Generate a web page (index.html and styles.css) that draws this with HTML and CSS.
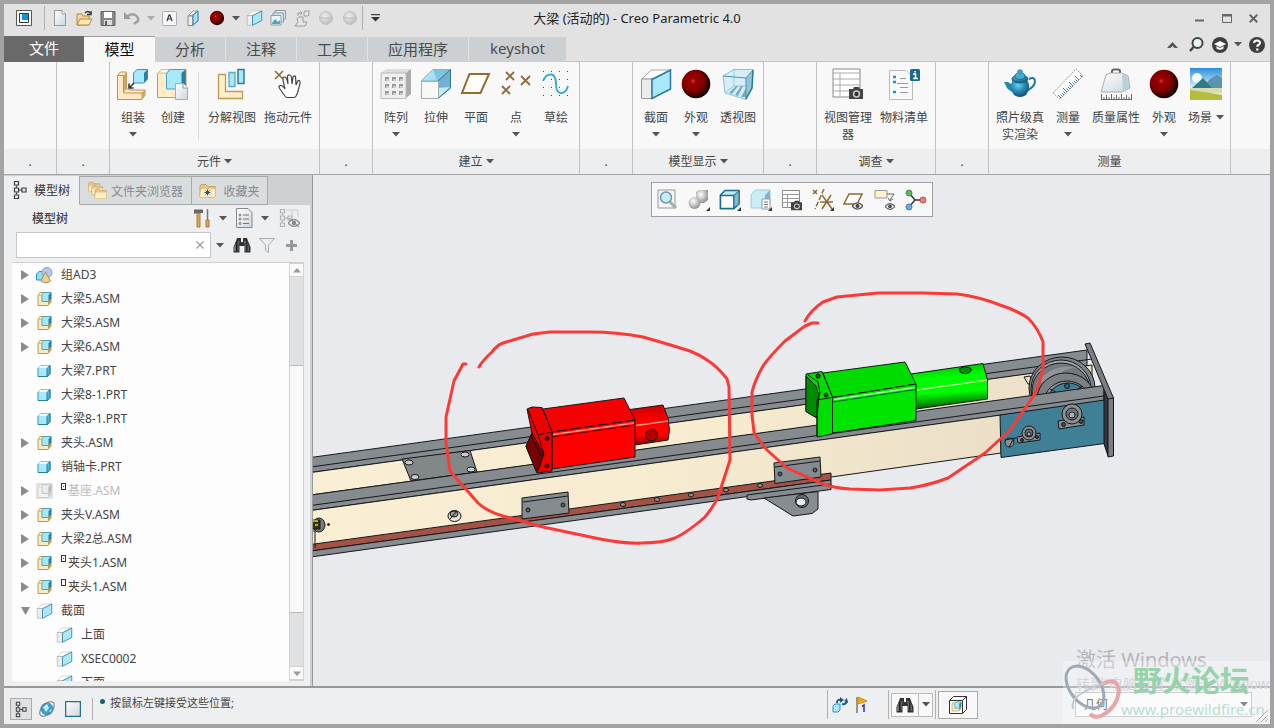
FILE: index.html
```html
<!DOCTYPE html>
<html lang="zh-CN">
<head>
<meta charset="utf-8">
<title>大梁 (活动的) - Creo Parametric 4.0</title>
<link rel="stylesheet" href="styles.css">
</head>
<body>
<svg class="defs" aria-hidden="true">
  <defs>
    <linearGradient id="gBlue" x1="0" y1="0" x2="1" y2="1"><stop offset="0" stop-color="#c8f2ff"/><stop offset="1" stop-color="#5fb9dc"/></linearGradient>
    <linearGradient id="gPage" x1="0" y1="0" x2="1" y2="1"><stop offset="0" stop-color="#fff"/><stop offset="1" stop-color="#ccd6de"/></linearGradient>
    <radialGradient id="gRed" cx=".4" cy=".4" r=".62"><stop offset="0" stop-color="#c84040"/><stop offset=".15" stop-color="#a00000"/><stop offset=".6" stop-color="#7c0000"/><stop offset="1" stop-color="#080000"/></radialGradient>
    <radialGradient id="gGray" cx=".4" cy=".35" r=".7"><stop offset="0" stop-color="#fff"/><stop offset="1" stop-color="#8a8a8a"/></radialGradient>
    <radialGradient id="gPot" cx=".4" cy=".3" r=".75"><stop offset="0" stop-color="#6fd0f0"/><stop offset=".5" stop-color="#2588b0"/><stop offset="1" stop-color="#0d4868"/></radialGradient>
    <linearGradient id="gSky" x1="0" y1="0" x2="0" y2="1"><stop offset="0" stop-color="#2a8fdc"/><stop offset=".6" stop-color="#d8eefa"/></linearGradient>
    <linearGradient id="gRodR" x1="0" y1="0" x2="0" y2="1"><stop offset="0" stop-color="#c00"/><stop offset=".4" stop-color="#f00"/><stop offset=".75" stop-color="#f00"/><stop offset="1" stop-color="#800"/></linearGradient>
    <linearGradient id="gRodG" x1="0" y1="0" x2=".12" y2="1"><stop offset="0" stop-color="#00b800"/><stop offset=".35" stop-color="#00fc00"/><stop offset=".68" stop-color="#00fa00"/><stop offset="1" stop-color="#006400"/></linearGradient>
    <linearGradient id="gBeam" x1="0" y1="0" x2="1" y2="0"><stop offset="0" stop-color="#faeed4"/><stop offset=".5" stop-color="#f7ebd0"/><stop offset="1" stop-color="#ebdfc8"/></linearGradient>
    <linearGradient id="gGlass" x1="0" y1="0" x2="1" y2="0"><stop offset="0" stop-color="#bbb"/><stop offset=".4" stop-color="#222"/><stop offset="1" stop-color="#777"/></linearGradient>
    <symbol id="asm" viewBox="0 0 16 16"><path d="M1.500 4.500 3.500 1.500H14.500V11L11.500 14.500H1.500Z" fill="#ffe9bd" stroke="#c09a50"/><path d="M1.500 4.500H5" stroke="#e0c080"/><path d="M11.500 14.500 14.500 11V8L11.500 10.500Z" fill="#c99b4a"/><path d="M5.500 3.500 7.500 1.500H14.500V7.500L12 10.500H5.500Z" fill="#a8e8fb" stroke="#4ba3c4"/><path d="M12 10.500V4L14.500 1.500V7.500Z" fill="#2b7fa3"/></symbol>
    <symbol id="prt" viewBox="0 0 16 16"><path d="M1.500 5.500 4.500 2.500H13.500V11L10.500 13.500H1.500Z" fill="#a8e8fb" stroke="#3592b8"/><path d="M2 5 4.500 2.500H13.500L10.500 5Z" fill="#e6faff"/><path d="M10.500 13.500V5.500L13.500 2.500V11Z" fill="#47b4dd" stroke="#2b7fa3"/><path d="M1.500 13.500H10.500" stroke="#2b7fa3"/></symbol>
    <symbol id="sec" viewBox="0 0 32 32"><path d="M2 11 11 2H31L12 11Z" fill="#fff" stroke="#aaa"/><path d="M1.500 11H12V30.500H1.500Z" fill="#ececec" stroke="#999"/><path d="M12 11.500 30.500 2V21L12 30.500Z" fill="#a9e7fb" stroke="#2b7799" stroke-width="1.500"/></symbol>
    <symbol id="ball" viewBox="0 0 32 32"><circle cx="16" cy="16" r="14.300" fill="url(#gRed)"/></symbol>
    <symbol id="bino" viewBox="0 0 18 16"><path d="M4 1H8V5H10V1H14L15 4 17.500 10V15.500H11.500V9H6.500V15.500H.5V10L3 4Z" fill="#333"/><path d="M3.500 4H6.500L5.500 14H1.500V10Z" fill="url(#gGlass)"/><path d="M11.500 4H14L16 10V14H12.500Z" fill="url(#gGlass)"/></symbol>
    <symbol id="arr" viewBox="0 0 8 5"><path d="M0 0H8L4 4.500Z" fill="#555"/></symbol>
    <symbol id="tri" viewBox="0 0 8 10"><path d="M0 0 8 5 0 10Z" fill="#8a8a8a"/></symbol>
    <symbol id="nodes" viewBox="0 0 14 20"><g fill="none" stroke="#3c3c3c" stroke-width="1.200"><path d="M3.500 5.500V7.500M3.500 12.500V14.500M6 10H9"/><path d="M1.500 1.500H5.500V5H1.500ZM1.500 8H5.500V12H1.500ZM1.500 15H5.500V18.500H1.500ZM9 8H13V12H9Z"/></g></symbol>
    <symbol id="cam" viewBox="0 0 16 14"><path d="M1 3H5L6 1H11L12 3H15V13H1Z" fill="#444"/><circle cx="8.500" cy="8" r="3.700" fill="#ccc"/><circle cx="8.500" cy="8" r="2.200" fill="#333"/></symbol>
    <symbol id="grid" viewBox="0 0 30 32"><path d="M1 1H28V29H1Z" fill="#fff" stroke="#888"/><path d="M1 5H28M1 11H28M1 17H28M1 23H28M8 5V29" stroke="#aaa" fill="none"/></symbol>
    <symbol id="fold" viewBox="0 0 18 16"><path d="M1 3 2 1.500H7L8.500 3.500H16V14H1Z" fill="#e8c486" stroke="#c6a263"/><path d="M2 6H16V14H1Z" fill="#ffeec6"/></symbol>
    <symbol id="eye" viewBox="0 0 12 8"><path d="M0 4Q6-3 12 4 6 11 0 4Z" fill="#eee" stroke="#555" stroke-width="1.300"/><circle cx="6" cy="4" r="2.200" fill="#444"/></symbol>
  </defs>
</svg>

<div class="app">
  <header class="titlebar">
    <div class="quick">
      <button class="slot" aria-label="窗口"><svg width="16" height="16"><path d="M.5.5H15.500V15.500H.5Z" fill="#fff" stroke="#555"/><path d="M3.500 3.500H12.500V12.500H3.500Z" fill="#fff" stroke="#333"/><path d="M6 4H12V10H6Z" fill="#0c96dc"/></svg></button>
      <span class="vsep lead"></span>
      <button class="slot" aria-label="新建"><svg width="16" height="16"><path d="M2.500.5H10L13.500 4V15.500H2.500Z" fill="url(#gPage)" stroke="#999"/><path d="M10 .5V4H13.500" fill="#fff" stroke="#999"/></svg></button>
      <button class="slot" aria-label="打开"><svg width="17" height="17"><path d="M1 15V4H6L7 6H13V15Z" fill="#f3d998" stroke="#b08a40"/><path d="M1 15 4 9H16L13 15Z" fill="#ffe8b0" stroke="#b08a40"/><path d="M9 3Q12 0 14 3M15 1V4.500H11" fill="none" stroke="#333" stroke-width="1.500"/></svg></button>
      <button class="slot" aria-label="保存"><svg width="16" height="17"><path d="M1 1.500H15V15.500H1Z" fill="#888" stroke="#666"/><path d="M4 2H12V8H4Z" fill="#fff"/><path d="M4 10H12V15H4Z" fill="#ddd"/><path d="M5 11H7V15H5Z" fill="#555"/></svg></button>
      <button class="slot" aria-label="撤消"><svg width="18" height="14"><path d="M1 1V8H8Z" fill="#999"/><path d="M4 6Q8 2 12 4T15 10L11 13" fill="none" stroke="#a0a0a0" stroke-width="2.500"/></svg></button>
      <button class="drop pale" aria-label="撤消列表"><svg width="8" height="5"><use href="#arr"/></svg></button>
      <button class="slot" aria-label="注释"><svg width="15" height="15"><rect x=".5" y=".5" width="14" height="14" rx="1" fill="#f4f6f8" stroke="#aab"/><path d="M5 10 7 4H8L10 10M5.500 8H9.500" fill="none" stroke="#333" stroke-width="1.200"/></svg></button>
      <button class="slot" aria-label="平面"><svg width="12" height="16"><path d="M1 6 6 1H11L6 5Z" fill="#fff" stroke="#999"/><path d="M1 6H6V15.500H1Z" fill="#eee" stroke="#888"/><path d="M6 5 11 1V11L6 15Z" fill="#9fe4fb" stroke="#2b7799"/></svg></button>
      <button class="slot" aria-label="外观"><svg width="16" height="16"><use href="#ball"/></svg></button>
      <button class="drop" aria-label="外观列表"><svg width="8" height="5"><use href="#arr"/></svg></button>
      <button class="slot" aria-label="截面"><svg width="17" height="16"><use href="#sec"/></svg></button>
      <button class="slot" aria-label="图像"><svg width="17" height="16"><path d="M5 .5H15.500V9H5Z" fill="#cfe9f5" stroke="#999"/><path d="M3 3H13.500V12H3Z" fill="#cfe9f5" stroke="#999"/><path d="M1 5.500H11V15H1Z" fill="#e8f5fb" stroke="#999"/><path d="M2 13 5 9 8 12 10 10V14H2Z" fill="#4aa5cc"/></svg></button>
      <button class="slot" aria-label="装配"><svg width="17" height="17" fill="#e6e6e6" stroke="#999"><path d="M10 2 11 1H15V5L14 6H10ZM3 9 5 7H9V12H13L11 16H1L4 12Z"/><path d="M4 6V3H8M6 1 8 3 6 5" fill="none"/></svg></button>
      <button class="slot" aria-label="上一个"><svg width="16" height="16" opacity=".45"><circle cx="8" cy="8" r="6.500" fill="url(#gGray)" stroke="#999"/><path d="M2 8H14" stroke="#888"/></svg></button>
      <button class="slot" aria-label="下一个"><svg width="16" height="16" opacity=".45"><circle cx="8" cy="8" r="6.500" fill="url(#gGray)" stroke="#999"/><path d="M2 8H14" stroke="#888"/></svg></button>
      <span class="vsep"></span>
      <button class="slot" aria-label="自定义"><svg width="9" height="8"><path d="M0 .5H9" stroke="#444" stroke-width="1.500"/><path d="M0 3H9L4.500 7.500Z" fill="#333"/></svg></button>
    </div>
    <h1 class="title">大梁 (活动的) - Creo Parametric 4.0</h1>
    <div class="winctl">
      <button aria-label="最小化"><svg width="9" height="12"><path d="M0 8.500H9" stroke="#666" stroke-width="2"/></svg></button>
      <button aria-label="最大化"><svg width="10" height="9"><path d="M.5.5H9.500V8.500H.5Z" fill="none" stroke="#666"/><path d="M0 1.500H10" stroke="#666" stroke-width="2"/></svg></button>
      <button aria-label="关闭"><svg width="9" height="9"><path d="M.7.7 8.300 8.300M8.300.7.7 8.300" stroke="#666" stroke-width="2"/></svg></button>
    </div>
  </header>

  <nav class="tabs">
    <button class="tab file">文件</button>
    <button class="tab active">模型</button>
    <button class="tab">分析</button>
    <button class="tab">注释</button>
    <button class="tab">工具</button>
    <button class="tab wide">应用程序</button>
    <button class="tab wide">keyshot</button>
    <div class="helpers">
      <button aria-label="折叠"><svg width="11" height="6"><path d="M0 6 5.500 0 11 6H7.500L5.500 4 3.500 6Z" fill="#555"/></svg></button>
      <button aria-label="搜索"><svg width="15" height="15"><circle cx="8.500" cy="6" r="5" fill="#e9f1f5" stroke="#444" stroke-width="2"/><path d="M5 9.500 1 14" stroke="#444" stroke-width="2.500"/></svg></button>
      <button aria-label="学习"><svg width="16" height="16"><circle cx="8" cy="8" r="8" fill="#3f3f3f"/><path d="M2 7 8 4 14 7 8 10Z" fill="#fff"/><path d="M4.500 9V11.500Q8 14 11.500 11.500V9L8 11Z" fill="#fff"/></svg></button>
      <button class="drop" aria-label="学习列表"><svg width="8" height="5"><use href="#arr"/></svg></button>
      <button aria-label="帮助"><svg width="16" height="16"><circle cx="8" cy="8" r="8" fill="#3f3f3f"/><path d="M5 6Q5 3.500 8 3.500T11 6Q11 7.500 8.500 8.500V10" fill="none" stroke="#fff" stroke-width="2"/><circle cx="8.300" cy="12.500" r="1.200" fill="#fff"/></svg></button>
    </div>
  </nav>

  <section class="ribbon">
    <div class="group slim"><div class="tools"></div><div class="caption">.</div></div>
    <div class="group slim"><div class="tools"></div><div class="caption">.</div></div>
    <div class="group g-comp">
      <div class="tools">
        <button class="tool"><svg width="32" height="32"><path d="M.5 7.500 3.500 4H9.500V20.500L13 22H28V27L25 31.500H.5Z" fill="#ffe9c4" stroke="#bb9450"/><path d="M6.500 7.500 9.500 4V21L6.500 24.500Z" fill="#cda968"/><path d="M.5 7.500H6.500V25H25V31M25 25 28 22" fill="none" stroke="#bb9450"/><path d="M25 25 28 22V27L25 31Z" fill="#cda968"/><path d="M16.500 5 20 1.500H30.500V11L26.500 15H16.500Z" fill="#a8e8fb" stroke="#3a94b9"/><path d="M27 5 30.500 1.500V11L27 15Z" fill="#2781a5"/><path d="M17 15 12 20M12 15.500V20H16.500" fill="none" stroke="#333" stroke-width="1.500"/></svg><span>组装</span><svg class="dn" width="8" height="5"><use href="#arr"/></svg></button>
        <button class="tool"><svg width="32" height="32"><path d="M.5 5.500 5 1.500H29V26L24 29.500H.5Z" fill="#ffedca" stroke="#c09a50"/><path d="M1 5 5 1.500H12L10 5Z" fill="#fff" stroke="#d9bd80"/><path d="M9.500 5 13.500 1.500H28.500V17L24 21H9.500Z" fill="#a8e8fb" stroke="#4ba3c4"/><path d="M24.500 5 28.500 1.500V17L24.500 20Z" fill="#287fa3"/><path d="M18.500 15.500H26L30.500 20V31.500H18.500Z" fill="url(#gPage)" stroke="#aaa"/><path d="M26 15.500V20H30.500" fill="#fff" stroke="#999"/></svg><span>创建</span></button>
        <span class="tsep"></span>
        <button class="tool w56"><svg width="32" height="32"><path d="M2.500 6.500H9.500V23.500H26.500V30.500H2.500Z" fill="#ffefcd" stroke="#c09a50" stroke-width="1.300"/><path d="M13 4.500H19V18.500H13Z" fill="#a8e8fb" stroke="#5aa8c6" stroke-width="1.300"/><path d="M22 1.500H28V15.500H22Z" fill="#a8e8fb" stroke="#2b7ba0" stroke-width="1.500"/></svg><span>分解视图</span></button>
        <button class="tool w56"><svg width="32" height="32"><path d="M3 3 11 11M11 3 3 11" stroke="#8d6b36" stroke-width="1.600"/><path d="M13 28 8 21Q6 18 8 17.500T13 21L11 12Q10.500 9 12.500 9T15 12L16 16 15.500 9Q15.500 6.500 17.500 7T19.500 10L20 16 21 9Q22 7 23.500 8.500L24 17 26 12.500Q28.500 12 28 15.500L25.500 25 24 28Q23 29.500 22 29.500H15Q14 29.500 13 28Z" fill="#fff" stroke="#444" stroke-width="1.200"/></svg><span>拖动元件</span></button>
      </div>
      <div class="caption">元件<svg width="8" height="5"><use href="#arr"/></svg></div>
    </div>
    <div class="group slim"><div class="tools"></div><div class="caption">.</div></div>
    <div class="group g-build">
      <div class="tools">
        <button class="tool"><svg width="32" height="32"><path d="M1 5 6 1H31L26 5Z" fill="#ddd"/><path d="M26 5 31 1V26L26 30Z" fill="#aaa"/><path d="M1 5H26V30.500H1Z" fill="#efefef" stroke="#bbb"/><g fill="#999"><path d="M5 9H9V13H5ZM12 9H16V13H12ZM19 9H23V13H19ZM5 16H9V20H5ZM12 16H16V20H12ZM19 16H23V20H19ZM5 23H9V27H5ZM12 23H16V27H12ZM19 23H23V27H19Z"/></g><path d="M6 12H9M13 12H16M20 12H23M6 19H9M13 19H16M20 19H23M6 26H9M13 26H16M20 26H23" stroke="#fff"/></svg><span>阵列</span><svg class="dn" width="8" height="5"><use href="#arr"/></svg></button>
        <button class="tool"><svg width="32" height="32"><path d="M1 13 13 1.500H30.500V20L18 30.500V13Z" fill="url(#gBlue)" stroke="#80b5ca"/><path d="M13 2H30V13H18Z" fill="#7cc5e2"/><path d="M18 13 30.500 1.500V19L18 30Z" fill="#74b0ce"/><path d="M18 30V20L30 19Z" fill="#bcecfb"/><path d="M18 13 30.500 1.500V20L18 30.500" fill="none" stroke="#28799d"/><path d="M1.500 13.500H18.500V30.500H1.500Z" fill="#f8f8f8" stroke="#aaa"/></svg><span>拉伸</span></button>
        <button class="tool"><svg width="32" height="32"><path d="M9.500 6H29L20.500 25H2Z" fill="#fffdf8" stroke="#906d31" stroke-width="2"/></svg><span>平面</span></button>
        <button class="tool"><svg width="32" height="32"><path d="M6 4 14 12M14 4 6 12M21 8 30 17M30 8 21 17M2 18 10 26M10 18 2 26" stroke="#8e6b3c" stroke-width="1.800"/></svg><span>点</span><svg class="dn" width="8" height="5"><use href="#arr"/></svg></button>
        <button class="tool"><svg width="32" height="32"><path d="M3 3.500H30M3 11.500H30M3 19.500H30M3 27.500H30" stroke="#444" stroke-dasharray="1 7"/><path d="M3 13Q6 6 11 6.500T16 16 21 25 28 18" fill="none" stroke="#35a9dd" stroke-width="1.900"/></svg><span>草绘</span></button>
      </div>
      <div class="caption">建立<svg width="8" height="5"><use href="#arr"/></svg></div>
    </div>
    <div class="group slim"><div class="tools"></div><div class="caption">.</div></div>
    <div class="group g-show">
      <div class="tools">
        <button class="tool"><svg width="32" height="32"><use href="#sec"/></svg><span>截面</span><svg class="dn" width="8" height="5"><use href="#arr"/></svg></button>
        <button class="tool"><svg width="32" height="32"><use href="#ball"/></svg><span>外观</span><svg class="dn" width="8" height="5"><use href="#arr"/></svg></button>
        <button class="tool w44"><svg width="32" height="32"><path d="M1 8 12 1.500H31L30 20 24 31.500 3 25Z" fill="#d6eef6" stroke="#8fc0d2"/><path d="M12 2V18L3 25M12 18H30" fill="none" stroke="#9cc8d8"/><path d="M7 25 14 18 16 18 10 26ZM13 27 19 18 21 18 16 28ZM19 29 24 20V29Z" fill="#72abc4"/><path d="M24 10 31 2 30 20 24 31Z" fill="#8bc1d4" opacity=".9"/><path d="M1 8 24 10 31 2M24 10V31" fill="none" stroke="#4a93b0"/><path d="M31 2 30 20 24 31" fill="none" stroke="#2b7799" stroke-width="1.500"/></svg><span>透视图</span></button>
      </div>
      <div class="caption">模型显示<svg width="8" height="5"><use href="#arr"/></svg></div>
    </div>
    <div class="group slim"><div class="tools"></div><div class="caption">.</div></div>
    <div class="group g-inv">
      <div class="tools">
        <button class="tool w56"><svg width="32" height="32"><use href="#grid" width="30" height="32"/><use href="#cam" x="16" y="18" width="16" height="14"/></svg><span>视图管理器</span></button>
        <button class="tool w56"><svg width="32" height="32"><path d="M1.500 2.500H18L24.500 9V31.500H1.500Z" fill="#f9f9f9" stroke="#bbb"/><path d="M12 10.500H18M9 15.500H20M12 19.500H20M12 24.500H20" stroke="#999"/><path d="M5 9H8M5 14H8M5 24H8" stroke="#1c91c8" stroke-width="2.500"/><rect x="22" y="1" width="10" height="12" rx="1.500" fill="#176a8e"/><path d="M25 6H27.500V10M25 10.500H30M27 3V4.500" fill="none" stroke="#fff" stroke-width="1.600"/></svg><span>物料清单</span></button>
      </div>
      <div class="caption">调查<svg width="8" height="5"><use href="#arr"/></svg></div>
    </div>
    <div class="group slim"><div class="tools"></div><div class="caption">.</div></div>
    <div class="group g-meas">
      <div class="tools">
        <button class="tool w56"><svg width="32" height="32"><path d="M25 11Q31 8 31 14 30 19 24 22" fill="none" stroke="#1d7ba2" stroke-width="2"/><path d="M0 14H4L10 18 11 25Q3 22 2 18Z" fill="#2386ac"/><path d="M9 12H23Q28 19 22 27 16 31 10 27 4 19 9 12Z" fill="url(#gPot)"/><ellipse cx="16" cy="11" rx="8" ry="4" fill="url(#gPot)" stroke="#1d6a8d"/><ellipse cx="16" cy="8" rx="5" ry="3.500" fill="#47a9d0" stroke="#1d6a8d"/><circle cx="16" cy="4" r="2.800" fill="#3aa0c8"/></svg><span>照片级真实渲染</span></button>
        <button class="tool"><svg width="32" height="32"><path d="M1 25 24 1 31 8 8 31Z" fill="#fff" stroke="#999" stroke-dasharray="2 1"/><path d="M9 30 6 27M12 27 10 25M15 24 11 20M18 21 16 19M21 18 17 14M24 15 22 13M27 12 23 8M30 9 28 7M10.500 28.500 8.500 26.500M13.500 25.500 11.500 23.500M16.500 22.500 14.500 20.500M19.500 19.500 17.500 17.500M22.500 16.500 20.500 14.500M25.500 13.500 23.500 11.500" stroke="#2583ad"/></svg><span>测量</span><svg class="dn" width="8" height="5"><use href="#arr"/></svg></button>
        <button class="tool w56"><svg width="32" height="32"><path d="M12 6V3.500Q12 1.500 14 1.500H18Q20 1.500 20 3.500V6" fill="none" stroke="#666" stroke-width="2"/><path d="M6 7 10 5H22L28 8 30 20 22 24H1Z" fill="url(#gPage)" stroke="#aaa"/><path d="M22 6 27 8 29.500 20 23 23Z" fill="#b6d0dc"/><path d="M1 31.500H32M1.500 31V26M6.500 31V27M11.500 31V26M16.500 31V27M21.500 31V26M26.500 31V27M31.500 31V26M4 31V29M9 31V29M14 31V29M19 31V29M24 31V29M29 31V29" fill="none" stroke="#666"/></svg><span>质量属性</span></button>
        <button class="tool"><svg width="32" height="32"><use href="#ball"/></svg><span>外观</span><svg class="dn" width="8" height="5"><use href="#arr"/></svg></button>
        <button class="tool w44"><svg width="32" height="32"><path d="M0 0H32V32H0Z" fill="url(#gSky)"/><circle cx="7" cy="10" r="5" fill="#fff" opacity=".9"/><path d="M12 20 20 11 27 7 32 10V20Z" fill="#5e93ae"/><path d="M2 20 13 10 22 20Z" fill="#2f7b8a"/><path d="M0 20H32V25H0Z" fill="#d9dcae"/><path d="M0 22Q16 24 32 27V32H0Z" fill="#b5bd41"/></svg><span class="with-arr">场景<svg width="8" height="5"><use href="#arr"/></svg></span></button>
      </div>
      <div class="caption">测量</div>
    </div>
    <div class="group rest"><div class="tools"></div><div class="caption"></div></div>
  </section>

  <main class="work">
    <aside class="side">
      <div class="sidetabs">
        <button class="stab on"><svg width="14" height="20"><use href="#nodes"/></svg>模型树</button>
        <button class="stab st2"><svg width="20" height="19"><use href="#fold" x="0" y="0" width="13" height="12"/><use href="#fold" x="3" y="3" width="13" height="12"/><use href="#fold" x="6" y="7" width="14" height="12"/></svg>文件夹浏览器</button>
        <button class="stab st3"><svg width="18" height="16"><use href="#fold"/><path d="M8.500 6.500V12.500M5.500 9.500H11.500M6.500 7.500 10.500 11.500M10.500 7.500 6.500 11.500" stroke="#17607f"/></svg>收藏夹</button>
      </div>
      <div class="sidebody">
        <div class="treehead">
          <h2>模型树</h2>
          <div class="treetools">
            <button class="slot" aria-label="设置"><svg width="18" height="20"><path d="M4 5H7V19H4Z" fill="#dca85c" stroke="#a67a38"/><path d="M1 1.500H10V5H4L1 6Z" fill="#666"/><path d="M14.500 1V12" stroke="#777" stroke-width="1.500"/><path d="M13 12H16V19H13Z" fill="#dca85c" stroke="#a67a38"/></svg></button>
            <button class="drop" aria-label="设置列表"><svg width="8" height="5"><use href="#arr"/></svg></button>
            <button class="slot" aria-label="显示"><svg width="17" height="20"><path d="M.5.5H12L16 4.500V19.500H.5Z" fill="url(#gPage)" stroke="#888"/><path d="M7 7H13M7 11H13M7 15.500H13" stroke="#777"/><g fill="none" stroke="#777"><circle cx="4" cy="7" r="1"/><circle cx="4" cy="11" r="1"/><circle cx="4" cy="15.500" r="1"/></g></svg></button>
            <button class="drop" aria-label="显示列表"><svg width="8" height="5"><use href="#arr"/></svg></button>
            <button class="slot" aria-label="隐藏"><svg width="21" height="20"><use href="#nodes" width="14" height="20" opacity=".35"/><path d="M7 2H19V9M13 2V8" fill="none" stroke="#ccc"/><use href="#eye" x="9" y="11" width="12" height="8" opacity=".6"/><path d="M10 10 20 19" stroke="#888"/></svg></button>
          </div>
        </div>
        <div class="searchrow">
          <div class="searchbox"><input type="text" aria-label="搜索模型树"><button aria-label="清除"><svg width="8" height="8"><path d="M.5.5 7.500 7.500M7.500.5.5 7.500" stroke="#999" stroke-width="1.200"/></svg></button></div>
          <button class="drop" aria-label="搜索列表"><svg width="8" height="5"><use href="#arr"/></svg></button>
          <button class="slot" aria-label="查找"><svg width="18" height="16"><use href="#bino"/></svg></button>
          <button class="slot" aria-label="过滤"><svg width="16" height="15"><path d="M.5.5H15.500L9.500 7V14.500L6.500 12.500V7Z" fill="#eee" stroke="#aaa"/></svg></button>
          <button class="slot" aria-label="添加"><svg width="11" height="11"><path d="M5.500 0V11M0 5.500H11" stroke="#999" stroke-width="3"/></svg></button>
        </div>
        <div class="treebox">
          <ul class="tree">
            <li><button class="exp" aria-label="展开"><svg width="8" height="10"><use href="#tri"/></svg></button><svg width="17" height="17"><path d="M.5 7 3 4.500H9V13H.5Z" fill="#8edcf6" stroke="#3a94b9"/><circle cx="11" cy="5.500" r="5" fill="#b9c6ec" stroke="#8a98c8"/><path d="M9.500 5 14.500 14Q10 17.500 5 14Z" fill="#edcf96" stroke="#b08a4a"/></svg><span>组AD3</span></li>
            <li><button class="exp" aria-label="展开"><svg width="8" height="10"><use href="#tri"/></svg></button><svg width="16" height="16"><use href="#asm"/></svg><span>大梁5.ASM</span></li>
            <li><button class="exp" aria-label="展开"><svg width="8" height="10"><use href="#tri"/></svg></button><svg width="16" height="16"><use href="#asm"/></svg><span>大梁5.ASM</span></li>
            <li><button class="exp" aria-label="展开"><svg width="8" height="10"><use href="#tri"/></svg></button><svg width="16" height="16"><use href="#asm"/></svg><span>大梁6.ASM</span></li>
            <li><i class="exp"></i><svg width="16" height="16"><use href="#prt"/></svg><span>大梁7.PRT</span></li>
            <li><i class="exp"></i><svg width="16" height="16"><use href="#prt"/></svg><span>大梁8-1.PRT</span></li>
            <li><i class="exp"></i><svg width="16" height="16"><use href="#prt"/></svg><span>大梁8-1.PRT</span></li>
            <li><button class="exp" aria-label="展开"><svg width="8" height="10"><use href="#tri"/></svg></button><svg width="16" height="16"><use href="#asm"/></svg><span>夹头.ASM</span></li>
            <li><i class="exp"></i><svg width="16" height="16"><use href="#prt"/></svg><span>销轴卡.PRT</span></li>
            <li class="muted"><button class="exp" aria-label="展开"><svg width="8" height="10"><use href="#tri"/></svg></button><svg class="off" width="16" height="16"><use href="#asm"/></svg><i class="mark dot"></i><span>基座.ASM</span></li>
            <li><button class="exp" aria-label="展开"><svg width="8" height="10"><use href="#tri"/></svg></button><svg width="16" height="16"><use href="#asm"/></svg><span>夹头V.ASM</span></li>
            <li><button class="exp" aria-label="展开"><svg width="8" height="10"><use href="#tri"/></svg></button><svg width="16" height="16"><use href="#asm"/></svg><span>大梁2总.ASM</span></li>
            <li><button class="exp" aria-label="展开"><svg width="8" height="10"><use href="#tri"/></svg></button><svg width="16" height="16"><use href="#asm"/></svg><i class="mark dot"></i><span>夹头1.ASM</span></li>
            <li><button class="exp" aria-label="展开"><svg width="8" height="10"><use href="#tri"/></svg></button><svg width="16" height="16"><use href="#asm"/></svg><i class="mark"></i><span>夹头1.ASM</span></li>
            <li><button class="exp" aria-label="折叠"><svg width="9" height="8"><path d="M0 0H9L4.500 8Z" fill="#8a8a8a"/></svg></button><svg width="16" height="16"><use href="#sec"/></svg><span>截面</span></li>
            <li class="child"><svg width="16" height="16"><use href="#sec"/></svg><span>上面</span></li>
            <li class="child"><svg width="16" height="16"><use href="#sec"/></svg><span>XSEC0002</span></li>
            <li class="child"><svg width="16" height="16"><use href="#sec"/></svg><span>下面</span></li>
          </ul>
          <div class="scroll">
            <button aria-label="向上"><svg width="8" height="5"><path d="M0 4.500H8L4 0Z" fill="#999"/></svg></button>
            <div class="track"><div class="thumb"></div></div>
            <button aria-label="向下"><svg width="8" height="5"><path d="M0 .5H8L4 5Z" fill="#999"/></svg></button>
          </div>
        </div>
      </div>
    </aside>

    <section class="view">
      <svg class="scene" viewBox="313 175 957 511" preserveAspectRatio="xMidYMid slice" role="img" aria-label="大梁三维模型">
        <g stroke="#15181a" stroke-width="1" stroke-linejoin="round">
          <!-- rear beam -->
          <path d="M300 459 1087 350V366L300 474Z" fill="#868c90"/>
          <path d="M300 468.500 1092 359" fill="none"/>
          <path d="M300 474 1092 365V388L300 496.500Z" fill="url(#gBeam)"/>
          <!-- mounting plate -->
          <path d="M402 459 470 450.500 477 472 411 481Z" fill="#828888"/>
          <g fill="#c9cdcd"><ellipse cx="409" cy="462.500" rx="4" ry="2.500"/><ellipse cx="465" cy="454.500" rx="4" ry="2.500"/><ellipse cx="415" cy="477" rx="4" ry="2.500"/><ellipse cx="471" cy="469.500" rx="4" ry="2.500"/></g>
          <!-- pulley -->
          <path d="M1024 377 1030 376 1033 384 1028 384Z" fill="#e9dcc4"/>
          <ellipse cx="1062" cy="388" rx="33" ry="31" fill="#7d8286"/>
          <ellipse cx="1061" cy="389" rx="30" ry="29" fill="#a2a7ab"/>
          <ellipse cx="1061" cy="391" rx="29" ry="28" fill="#74797d"/>
          <path d="M1036 384Q1052 362 1078 368 1066 366 1056 378Z" fill="#8f9498" stroke="none"/>
          <ellipse cx="1066" cy="399" rx="29" ry="26" fill="#7b8084"/>
          <ellipse cx="1067" cy="402" rx="23" ry="21" fill="#8f9498"/>
          <ellipse cx="1068" cy="403" rx="21" ry="20" fill="#3f8196"/>
          <circle cx="1067" cy="386" r="2.500" fill="#2f6578"/><path d="M1050 389 1056 392M1082 386 1077 390"/>
          <!-- front beam -->
          <path d="M300 496.500 1104 385.500V401L300 512Z" fill="#858b8f"/>
          <path d="M300 507 1104 396" fill="none"/>
          <path d="M300 512 1001 415V453L831 477 300 548Z" fill="url(#gBeam)"/>
          <path d="M300 546 831 473V480L300 552.500Z" fill="#a35245"/>
          <path d="M300 552.500 831 480V485L300 558.500Z" fill="#868c90"/>
          <path d="M747 495 831 484V489.500L751 500 747 499Z" fill="#868c90"/>
          <path d="M764 498 793 516 812 513.500 818 509V491.500Z" fill="#868c90"/>
          <circle cx="802" cy="501" r="6.500" fill="#666b6e"/><ellipse cx="801" cy="502" rx="5" ry="4" fill="#e8e9ed"/>
          <g fill="#858b8f"><path d="M522 498 568 492 569 513 522 519Z"/><path d="M774 463 820 457 821 477 775 483.500Z"/></g>
          <path d="M523 502 568 496M775 467 820 461" fill="none"/>
          <g fill="#5c6164"><circle cx="528" cy="510" r="2"/><circle cx="563" cy="505" r="2"/><circle cx="780" cy="474" r="2"/><circle cx="815" cy="470" r="2"/></g>
          <g fill="#8a8f92"><ellipse cx="623" cy="504.500" rx="2.500" ry="2"/><ellipse cx="657" cy="499.500" rx="2.500" ry="2"/><ellipse cx="691" cy="495" rx="2.500" ry="2"/><ellipse cx="726" cy="490" rx="2.500" ry="2"/><ellipse cx="760" cy="485.500" rx="2.500" ry="2"/></g>
          <ellipse cx="454.500" cy="516" rx="6.500" ry="5.500" fill="#eee4cf"/><ellipse cx="454" cy="514" rx="4" ry="3" fill="#999"/><path d="M450 519 457 511"/>
          <ellipse cx="319" cy="525" rx="6" ry="7" fill="#777c7e"/><path d="M310 520H320V529H310Z" fill="#33330a"/><path d="M313 521H318M315 525H318" stroke="#d8d820" stroke-width="1.500"/><circle cx="328.500" cy="524.500" r="1" fill="#222"/><path d="M310 531H315V548" fill="none"/>
          <!-- blue panel -->
          <path d="M1000 415 1104.500 400V443.500L1001 457.500Z" fill="#3f8096"/>
          <path d="M1104 386 1108 398V456L1104 444Z" fill="#33373a"/>
          <path d="M1085 344 1090 343 1113.500 398V456L1108 457V399Z" fill="#797e82"/>
          <path d="M1108 399 1113.500 398"/>
          <g fill="#8a8f93">
            <path d="M1058 421 1084 417V425L1059 429Z"/><circle cx="1072" cy="414" r="10"/><circle cx="1072" cy="414" r="6" fill="#6d7276"/><circle cx="1072" cy="415" r="3" fill="#b0b4b7"/>
            <circle cx="1063.500" cy="424.500" r="2" fill="#44484b"/><circle cx="1081" cy="421.500" r="2" fill="#44484b"/>
            <path d="M1017 437 1040 433V440L1018 443Z"/><circle cx="1029" cy="433" r="7"/><circle cx="1029" cy="433" r="4" fill="#6d7276"/><circle cx="1029" cy="434" r="2" fill="#a5aaad"/>
            <circle cx="1022" cy="440" r="1.500" fill="#44484b"/><circle cx="1037" cy="437" r="1.500" fill="#44484b"/>
            <circle cx="1009.500" cy="442.500" r="4.500"/><path d="M1005 440 1016 438M1009 447 1014 438"/>
          </g>
          <!-- red cylinder -->
          <path d="M630 409.500 663 405 668 418 669.500 430 668 440 635 445Z" fill="url(#gRodR)"/>
          <circle cx="651.500" cy="435" r="6" fill="#b00000"/>
          <path d="M543 409 624 398 635 420 552 432Z" fill="#f40202"/>
          <path d="M552 432 635 420V457L552 469Z" fill="#fd0000"/>
          <path d="M552 437 635 425" stroke="#600" fill="none"/>
          <path d="M553 434.500 634 423M636 425.500 668 421" stroke="#ff9a80" stroke-width="1.500" fill="none"/>
          <path d="M527 409 532 407 542 407.500 552 432V471L537 473 526 446.500 532 433Z" fill="#f00000"/>
          <path d="M526 446 532 433 543 453 540 466 536 471Z" fill="#7c0000"/>
          <path d="M528 410 538 435 552 432M538 435 544 454 537 473M531 436 541 456" fill="none"/>
          <circle cx="547" cy="438.500" r="2" fill="#700"/><circle cx="547" cy="466" r="2" fill="#700"/>
          <!-- green cylinder -->
          <path d="M911 374 983 363.500 987.500 380V399L916 409Z" fill="url(#gRodG)"/>
          <path d="M917 390 987 380" stroke="#b0ff90" stroke-width="1.500"/>
          <path d="M959 369Q965 365 971 368.500V371Q966 376 960 372Z" fill="#009000"/>
          <path d="M823 373 905 362 916 384 832.500 397.500Z" fill="#00dc00"/>
          <path d="M832.500 397.500 916 384V420.500L832.500 433Z" fill="#00e400"/>
          <path d="M833 402 916 389.500" stroke="#064" fill="none"/>
          <path d="M834 399.500 915 387.500" stroke="#a0ff90" stroke-width="1.500"/>
          <path d="M806 374 822 371.500 832.500 397.500V434L817 437V418L806 411.500Z" fill="#00dd00"/>
          <path d="M806 376 816 386 819 396 817 418 806 411.500Z" fill="#008b00"/>
          <path d="M808 375 818 382 820 393 817 400 832 397.500M817 400V436" fill="none"/>
          <circle cx="818" cy="376" r="2.200" fill="#060"/><circle cx="826" cy="395" r="2" fill="#060"/>
        </g>
        <g class="pen">
          <path d="M466 364H463L454 381 446 417V443L450 471 478 503Q488 512 503 516L543 527 600 539Q626 544 642 543 662 543 675 538 688 532 705 517 714 506 718 497L730 460 729 387 727 379Q718 367 707 360 700 355 690 351 668 344 643 337 616 332 590 332H550L533 334 503 343Q496 346 492 352 483 360 479 367"/>
          <path d="M818 323H812L805 326 785 341Q770 356 763 366 755 380 752 392V415L754 432Q756 437 767 450L787 468 823 484Q834 488 850 489L880 490 910 488Q930 485 948 478L985 453 1010 430 1033 397Q1040 384 1043 367V342Q1038 328 1028 318 1016 310 1000 305 980 297 957 294L923 293H878L837 297 823 302Q811 310 805 321"/>
        </g>
      </svg>
      <div class="floatbar">
        <button aria-label="重新调整"><svg width="22" height="22"><path d="M1 1H18V19H1Z" fill="#f4f4f4" stroke="#999"/><circle cx="9" cy="8.500" r="5.500" fill="#c6ecf8" stroke="#6e9bac" stroke-width="1.500"/><path d="M13 13 19 19" stroke="#aaa" stroke-width="3"/></svg></button>
        <button aria-label="渲染"><svg width="22" height="22"><path d="M8 3 11 1H20V11L16 14H8Z" fill="url(#gGray)"/><circle cx="6.500" cy="14" r="6" fill="url(#gGray)"/><path d="M22 18V22H18Z" fill="#333"/></svg></button>
        <button aria-label="显示样式"><svg width="22" height="22"><path d="M1.500 6 6 1.500H20V15L15 19.500H1.500Z" fill="#bfeafa" stroke="#1e6b90" stroke-width="1.500"/><path d="M1.500 6.500H15V19.500H1.500Z" fill="#fff" stroke="#1e6b90" stroke-width="1.500"/><path d="M15 6 20 2V15L15 19Z" fill="#80bdd5" stroke="#1e6b90"/><path d="M22 18V22H18Z" fill="#333"/></svg></button>
        <button aria-label="已保存方向"><svg width="22" height="22"><path d="M1 6 5 1H20V14L15 19H1Z" fill="#c9ecf7" stroke="#a5cbd8"/><path d="M15 6 20 1V14L15 19Z" fill="#7eb7cc"/><path d="M12 10H20V20H12Z" fill="#fff" stroke="#999"/><path d="M14 13H18M14 15.500H18M14 18H18" stroke="#777"/><path d="M22 18V22H18Z" fill="#333"/></svg></button>
        <button aria-label="视图管理器"><svg width="22" height="22"><path d="M1.500 1.500H18.500V18.500H1.500Z" fill="#fff" stroke="#888"/><path d="M1 5.500H19M1 9.500H19M1 13.500H19M6.500 5V19" stroke="#999" fill="none"/><use href="#cam" x="9" y="11" width="13" height="11"/></svg></button>
        <button aria-label="基准显示"><svg width="22" height="22"><path d="M1 1 5 5M5 1 1 5M8 13H21M10 6 20 20M19 6 10 20" stroke="#8b6c35" stroke-width="1.500" fill="none"/><path d="M12 0 3 20" stroke="#8b6c35" stroke-width="1.500" stroke-dasharray="5 2"/><path d="M22 18V22H18Z" fill="#333"/></svg></button>
        <button aria-label="平面显示"><svg width="22" height="22"><path d="M6 5H19L14 15H1Z" fill="#fff" stroke="#8b6c35" stroke-width="1.500"/><use href="#eye" x="9" y="13" width="11" height="8"/></svg></button>
        <button aria-label="注释显示"><svg width="22" height="22"><path d="M1 1.500H13V9H1Z" fill="#fff0cc" stroke="#999"/><path d="M13 5H20L16 11M14 9 16 12 19 10" fill="none" stroke="#666"/><use href="#eye" x="11" y="14" width="10" height="7"/></svg></button>
        <button aria-label="旋转中心"><svg width="22" height="22"><path d="M4 4 10 11 4 18M10 11H18" fill="none" stroke="#333" stroke-width="1.500"/><circle cx="4" cy="4" r="3" fill="#6ab26a" stroke="#4a8a4a"/><circle cx="4" cy="18" r="3" fill="#67aede" stroke="#3d7fae"/><circle cx="18" cy="11" r="3" fill="#e88080" stroke="#c04e4e"/></svg></button>
      </div>
    </section>
  </main>

  <footer class="status">
    <div class="st-left">
      <button class="pressed" aria-label="模型树"><svg width="12" height="17"><use href="#nodes"/></svg></button>
      <button class="slot" aria-label="浏览器"><svg width="18" height="18"><circle cx="9" cy="9" r="6.500" fill="#3aa2d3"/><path d="M5 7 9 4 11 8 8 12ZM11 11 14 9 13 13Z" fill="#c5ecf9"/><ellipse cx="9" cy="9" rx="9" ry="5" transform="rotate(-45 9 9)" fill="none" stroke="#778"/></svg></button>
      <button class="slot" aria-label="全屏"><svg width="16" height="16"><path d="M.5.5H15.500V15.500H.5Z" fill="url(#gPage)" stroke="#286d8f" stroke-width="1.500"/></svg></button>
      <span class="vsep"></span>
    </div>
    <p class="message">按鼠标左键接受这些位置;</p>
    <div class="st-flags">
      <button class="slot" aria-label="重新生成"><svg width="16" height="17"><path d="M1 10 3 8H8V14L6 16H1Z" fill="#a8e8fb" stroke="#3a94b9"/><path d="M5 7Q5 3 9 4M15 5Q14 9 10 8" fill="none" stroke="#1c5e80" stroke-width="2"/><path d="M8 1 12 4 8 7ZM12 5 15 2 16 7Z" fill="#1c5e80"/></svg></button>
      <button class="slot" aria-label="通知"><svg width="15" height="18"><path d="M2 1V17" stroke="#777" stroke-width="1.500"/><path d="M3 1 12 5 3 8Z" fill="#f2ad16" stroke="#d18f0b"/><path d="M7 10.500 9 9V16" fill="none" stroke="#2530b8" stroke-width="1.500"/></svg></button>
    </div>
    <div class="st-find">
      <div class="combo"><button aria-label="查找"><svg width="18" height="16"><use href="#bino"/></svg></button><button aria-label="查找列表"><svg width="8" height="5"><use href="#arr"/></svg></button></div>
    </div>
    <div class="st-filter">
      <button class="boxbtn" aria-label="选择"><svg width="20" height="20"><path d="M1.500 5.500 5.500 1.500H18.500V14.500L14.500 18.500H1.500ZM1.500 5.500H14.500V18.500M14.500 5.500 18.500 1.500" fill="#fff" stroke="#333"/><use href="#asm" x="3" y="6" width="11" height="11"/></svg></button>
      <div class="pick"><select aria-label="选择过滤器"><option>几何</option></select><svg width="8" height="5"><use href="#arr"/></svg></div>
    </div>
  </footer>

  <div class="mark-layer" aria-hidden="true">
    <p class="activate">激活 Windows</p>
    <p class="goto">转到“电脑设置”以激活 Windows</p>
    <div class="forum">
      <svg width="60" height="58"><g fill="none"><ellipse cx="22" cy="26" rx="15" ry="24" transform="rotate(-38 22 26)" stroke="#9dabb8" stroke-width="3"/><path d="M38 24Q54 14 56 30 54 46 40 54 32 58 27 53" stroke="#e8a6a8" stroke-width="4"/><path d="M42 22Q30 25 16 34 8 40 10 48" stroke="#c3cad1" stroke-width="2"/></g></svg>
      <div class="forum-text"><b>野火论坛</b><span>www.proewildfire.cn</span></div>
    </div>
    <svg class="grip" width="12" height="12"><path d="M0 12 12 0M5 12 12 5M9 12 12 9" stroke="#aaa"/></svg>
  </div>
</div>
</body>
</html>
```
FILE: styles.css
```css
* { box-sizing: border-box; }
body { margin: 0; font-family: "Noto Sans", "Noto Sans CJK SC", sans-serif; font-size: 12px; color: #444; }
button { border: 0; padding: 0; margin: 0; background: none; font: inherit; color: inherit; display: flex; align-items: center; justify-content: center; }
h1, h2, p, ul { margin: 0; padding: 0; font-weight: normal; }
svg { display: block; flex: none; }
.defs { position: absolute; width: 0; height: 0; }

.app { position: relative; height: 100vh; border: 4px solid #a3a3a3; display: flex; flex-direction: column; overflow: hidden; background: #e2e2e2; }

/* title bar */
.titlebar { display: grid; grid-template-columns: 1fr auto 1fr; align-items: center; height: 32px; padding-bottom: 4px; }
.quick { display: flex; align-items: center; padding-left: 8px; }
.slot { width: 24px; height: 24px; }
.drop { width: 12px; height: 20px; }
.quick .drop { width: 13px; }
.pale { opacity: .4; }
.vsep { width: 1px; height: 24px; background: #b0b0b0; }
.lead { margin: 0 3px 0 8px; }
.title { font-size: 13px; line-height: 20px; color: #222; }
.winctl { display: flex; justify-content: flex-end; padding-right: 3px; }
.winctl button { width: 27px; height: 24px; }

/* ribbon tabs */
.tabs { display: flex; height: 26px; gap: 1px; border-bottom: 1px solid #c4c6c8; }
.tab { width: 70px; height: 25px; margin-top: 1px; padding-bottom: 3px; background: #ccd0d3; color: #4a4a4a; font-size: 15px; }
.tab.wide { width: 100px; }
.tab.wide + .wide { width: 97px; }
.tab.file { width: 80px; height: 26px; margin: 0 -1px 0 0; background: #696969; color: #fff; }
.tab.active { width: 71px; height: 26px; margin: 0 -1px 0 0; background: #f8f8f8; color: #111; border-top: 1px solid #999; }
.helpers { display: flex; align-items: center; margin-left: auto; padding-bottom: 8px; }
.helpers button { width: 24px; height: 20px; }
.helpers button.drop { width: 12px; }
.helpers button:last-child { width: 26px; }

/* ribbon */
.ribbon { display: flex; height: 113px; background: #f8f8f8; border-bottom: 1px solid #a3a3a3; }
.group { display: flex; flex-direction: column; border-right: 1px solid #c0c2c4; }
.slim { width: 53px; }
.g-comp { width: 210px; }
.g-build { width: 207px; }
.g-show { width: 131px; }
.g-inv { width: 119px; }
.g-meas { width: 242px; }
.rest { flex: 1; border-right: 0; }
.tools { flex: 1; display: flex; align-items: flex-start; padding: 6px 0 0 3px; }
.tool { width: 40px; flex-direction: column; justify-content: flex-start; line-height: 17px; text-align: center; }
.tool > span { margin-top: 9px; padding: 0 4px; }
.tool.w56 { width: 56px; }
.tool.w44 { width: 44px; }
.w44 > span { padding: 0; }
.dn { margin-top: 6px; }
.with-arr { display: flex; align-items: center; gap: 4px; }
.tsep { width: 1px; height: 68px; margin: 4px 5px 0; background: #ddd; }
.caption { height: 25px; background: #edeef0; display: flex; align-items: center; justify-content: center; gap: 3px; line-height: 18px; }

/* side panel */
.work { flex: 1; min-height: 0; display: flex; }
.side { width: 309px; display: flex; flex-direction: column; background: #cfd0d2; border-right: 1px solid #999; }
.sidetabs { display: flex; height: 30px; padding-top: 1px; background: #cfd0d2; }
.stab { gap: 7px; border: 1px solid #a6a8aa; border-left: 0; background: #d9dddd; color: #8a8890; }
.stab.on { width: 76px; background: #edeff1; color: #333; border-top: 0; border-bottom-color: #edeff1; }
.st2 { width: 112px; gap: 3px; }
.st3 { width: 76px; gap: 6px; }
.sidebody { flex: 1; min-height: 0; margin-right: 2px; padding: 0 6px 5px 8px; background: #edeff1; display: flex; flex-direction: column; }
.treehead { display: flex; align-items: center; justify-content: space-between; height: 26px; padding: 0 3px 0 20px; }
.treehead h2 { font-size: 12px; font-weight: 500; }
.treetools { display: flex; align-items: center; gap: 3px; }
.treetools .slot:last-child { margin-left: 3px; }
.searchrow { display: flex; align-items: center; padding: 1px 0 4px 4px; }
.searchbox { flex: 1; min-width: 0; height: 26px; display: flex; background: #fff; border: 1px solid #c5c7c9; }
.searchbox input { flex: 1; min-width: 0; border: 0; background: none; padding: 0 4px; font: inherit; outline: 0; }
.searchbox button { width: 20px; }
.searchrow .drop { width: 18px; flex: none; }
.searchrow .slot { width: 25px; flex: none; }
.treebox { flex: 1; min-height: 0; display: flex; overflow: hidden; background: #fdfdfd; border-top: 1px solid #cdd0d2; }
.tree { flex: 1; list-style: none; overflow: hidden; padding-left: 8px; }
.tree li { display: flex; align-items: center; height: 24px; line-height: 18px; }
.tree li > span { margin-left: 8px; }
.tree li > svg { width: 17px; margin-left: 6px; }
.exp { width: 10px; height: 12px; }
.tree li.child { padding-left: 30px; }
.muted { color: #bcbcbc; }
.off { filter: grayscale(.8); opacity: .5; background: #ccc; }
.mark { width: 5px; height: 7px; margin: -9px 0 0 8px; border: 1px solid #333; }
.dot { background: linear-gradient(#333, #333) center / 1px 1px no-repeat; }
.tree li > .mark + span { margin-left: 2px; }
.scroll { width: 15px; display: flex; flex-direction: column; background: #dfe1e3; border: 1px solid #d0d2d4; border-top: 0; }
.scroll button { height: 14px; background: #fafafa; border: 1px solid #d0d2d4; border-width: 1px 0; }
.track { flex: 1; display: flex; flex-direction: column; }
.track::before { content: ""; flex: 88; }
.track::after { content: ""; flex: 53; }
.thumb { flex: 248; background: #f9f9f9; border: 1px solid #bbb; border-width: 1px 0; }

/* model view */
.view { position: relative; flex: 1; min-width: 0; background: #e9eaee; }
.scene { width: 100%; height: 100%; }
.pen { fill: none; stroke: #fb3a38; stroke-width: 3; stroke-linecap: round; stroke-linejoin: round; }
.floatbar { position: absolute; top: 7px; left: 50%; transform: translateX(-50%); display: flex; padding: 6px 0 6px 1px; background: #f8f8f8; border: 1px solid #a0a0a0; }
.floatbar button { width: 31px; height: 21px; }

/* status bar */
.status { display: flex; align-items: stretch; height: 38px; background: #edeff1; border-top: 2px solid #989898; }
.st-left { display: flex; align-items: center; padding: 6px 0 0 6px; }
.pressed { width: 22px; height: 22px; background: #e0e1e3; border: 1px solid #aaa; margin-right: 2px; }
.st-left .slot { width: 26px; }
.st-left .vsep { height: 22px; margin-left: 6px; }
.message { flex: 1; padding: 6px 0 0 7px; font-size: 11px; line-height: 18px; }
.message::before { content: ""; display: inline-block; width: 5px; height: 5px; margin: 0 5px 3px 0; border-radius: 50%; background: #1b5f80; }
.st-flags, .st-find, .st-filter { display: flex; border-left: 1px solid #b0b0b0; margin: 2px 0 5px; align-items: center; }
.st-flags { width: 61px; }
.st-flags .slot { width: 23px; }
.st-find { width: 47px; padding-left: 2px; }
.st-filter { width: 335px; padding-left: 2px; }
.combo { display: flex; height: 24px; border: 1px solid #bbb; background: #f8f8f8; }
.combo button { width: 26px; }
.combo button + button { width: 14px; border-left: 1px solid #bbb; }
.boxbtn { width: 40px; height: 28px; border: 1px solid #aaa; background: #f8f8f8; }
.pick { position: relative; width: 177px; height: 25px; margin-left: 97px; }
.pick select { appearance: none; width: 100%; height: 100%; padding: 0 8px; border: 1px solid #bbb; border-radius: 0; background: #fafafa; font: inherit; color: #444; }
.pick svg { position: absolute; right: 4px; top: 10px; }

/* translucent marks over the lower right corner */
.mark-layer { position: absolute; right: 0; bottom: 0; width: 207px; height: 79px; overflow: hidden; pointer-events: none; }
.activate { position: absolute; left: 13px; top: 1px; font-size: 20px; line-height: 28px; color: #b5b6b9; white-space: nowrap; }
.goto { position: absolute; left: 13px; top: 29px; font-size: 14px; line-height: 20px; color: #c3c4c8; white-space: nowrap; }
.forum { position: absolute; inset: 16px 0 0 0; display: flex; background: rgba(255, 255, 255, .3); }
.forum-text { display: flex; flex-direction: column; margin-left: -2px; padding-top: 3px; white-space: nowrap; }
.forum-text b { padding-left: 12px; font-size: 29px; line-height: 34px; font-weight: 700; color: #94d3ac; }
.forum-text span { font-size: 15px; line-height: 22px; color: #b9dcd8; }
.grip { position: absolute; right: 2px; bottom: 2px; }
```
